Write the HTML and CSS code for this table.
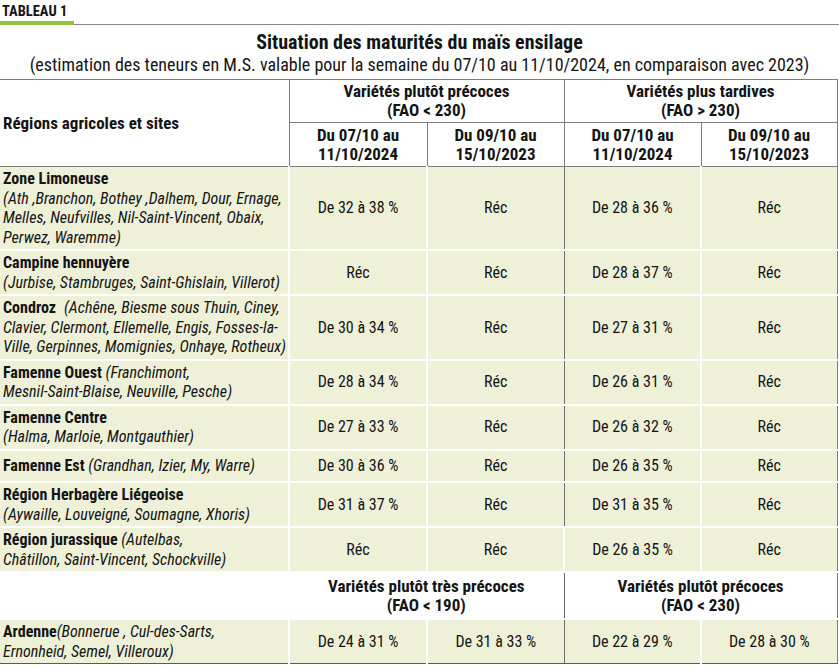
FILE: index.html
```html
<!DOCTYPE html>
<html lang="fr">
<head>
<meta charset="utf-8">
<title>Tableau 1</title>
<link rel="stylesheet" href="styles.css">
</head>
<body>
<div class="page">
  <div class="label-bar">
    <div class="label">TABLEAU 1</div>
  </div>
  <div class="title">Situation des maturités du maïs ensilage</div>
  <div class="subtitle">(estimation des teneurs en M.S. valable pour la semaine du 07/10 au 11/10/2024, en comparaison avec 2023)</div>
  <table class="grid">
    <colgroup>
      <col class="w1"><col class="w2"><col class="w3"><col class="w4"><col class="w5">
    </colgroup>
    <thead>
      <tr class="h1">
        <th rowspan="2" class="region-head">Régions agricoles et sites</th>
        <th colspan="2">Variétés plutôt précoces<br>(FAO &lt; 230)</th>
        <th colspan="2">Variétés plus tardives<br>(FAO &gt; 230)</th>
      </tr>
      <tr class="h2">
        <th>Du 07/10 au<br>11/10/2024</th>
        <th>Du 09/10 au<br>15/10/2023</th>
        <th>Du 07/10 au<br>11/10/2024</th>
        <th>Du 09/10 au<br>15/10/2023</th>
      </tr>
    </thead>
    <tbody>
      <tr>
        <td class="name"><b>Zone Limoneuse</b><br><i>(Ath ,Branchon, Bothey ,Dalhem, Dour, Ernage,<br>Melles, Neufvilles, Nil-Saint-Vincent, Obaix,<br>Perwez, Waremme)</i></td>
        <td>De 32 à 38 %</td><td class="mid">Réc</td><td>De 28 à 36 %</td><td>Réc</td>
      </tr>
      <tr>
        <td class="name"><b>Campine hennuyère</b><br><i>(Jurbise, Stambruges, Saint-Ghislain, Villerot)</i></td>
        <td>Réc</td><td class="mid">Réc</td><td>De 28 à 37 %</td><td>Réc</td>
      </tr>
      <tr>
        <td class="name"><b>Condroz</b><span class="gap"></span><i>(Achêne, Biesme sous Thuin, Ciney,<br>Clavier, Clermont, Ellemelle, Engis, Fosses-la-<br>Ville, Gerpinnes, Momignies, Onhaye, Rotheux)</i></td>
        <td>De 30 à 34 %</td><td class="mid">Réc</td><td>De 27 à 31 %</td><td>Réc</td>
      </tr>
      <tr>
        <td class="name"><b>Famenne Ouest</b> <i>(Franchimont,<br>Mesnil-Saint-Blaise, Neuville, Pesche)</i></td>
        <td>De 28 à 34 %</td><td class="mid">Réc</td><td>De 26 à 31 %</td><td>Réc</td>
      </tr>
      <tr>
        <td class="name"><b>Famenne Centre</b><br><i>(Halma, Marloie, Montgauthier)</i></td>
        <td>De 27 à 33 %</td><td class="mid">Réc</td><td>De 26 à 32 %</td><td>Réc</td>
      </tr>
      <tr class="single">
        <td class="name"><b>Famenne Est</b> <i>(Grandhan, Izier, My, Warre)</i></td>
        <td>De 30 à 36 %</td><td class="mid">Réc</td><td>De 26 à 35 %</td><td>Réc</td>
      </tr>
      <tr>
        <td class="name"><b>Région Herbagère Liégeoise</b><br><i>(Aywaille, Louveigné, Soumagne, Xhoris)</i></td>
        <td>De 31 à 37 %</td><td class="mid">Réc</td><td>De 31 à 35 %</td><td>Réc</td>
      </tr>
      <tr>
        <td class="name"><b>Région jurassique</b> <i>(Autelbas,<br>Châtillon, Saint-Vincent, Schockville)</i></td>
        <td>Réc</td><td class="mid-white">Réc</td><td>De 26 à 35 %</td><td>Réc</td>
      </tr>
      <tr class="subhead">
        <th></th>
        <th colspan="2" class="mid">Variétés plutôt très précoces<br>(FAO &lt; 190)</th>
        <th colspan="2">Variétés plutôt précoces<br>(FAO &lt; 230)</th>
      </tr>
      <tr class="last">
        <td class="name"><b>Ardenne</b><i>(Bonnerue , Cul-des-Sarts,<br>Ernonheid, Semel, Villeroux)</i></td>
        <td>De 24 à 31 %</td><td class="mid">De 31 à 33 %</td><td>De 22 à 29 %</td><td>De 28 à 30 %</td>
      </tr>
    </tbody>
  </table>
</div>
</body>
</html>
```

FILE: styles.css
```css
html, body {
  margin: 0;
  padding: 0;
  background: #ffffff;
}

body {
  font-family: "Roboto Condensed", "Liberation Sans Narrow", Roboto, "Liberation Sans", sans-serif;
  font-stretch: 75%;
  color: #141414;
}

.page {
  width: 839px;
}

.label-bar {
  border-bottom: 1px solid #8a8a8a;
  height: 25px;
  box-sizing: border-box;
  display: flex;
  align-items: flex-end;
}

.label {
  font-weight: 700;
  font-size: 14.5px;
  line-height: 17px;
  padding: 0 7px 1px 2px;
  border-bottom: 4px solid #8cc63e;
  white-space: nowrap;
  margin-bottom: -1px;
}

.title {
  text-align: center;
  font-weight: 700;
  font-size: 20px;
  line-height: 22px;
  margin-top: 6px;
}

.subtitle {
  text-align: center;
  font-size: 18px;
  line-height: 24px;
  margin-bottom: 2px;
}

.grid {
  width: 837px;
  table-layout: fixed;
  border-collapse: collapse;
  font-size: 16px;
  line-height: 19.5px;
}

.w1 { width: 289px; }
.w2 { width: 138px; }
.w3 { width: 137px; }
.w4 { width: 137px; }
.w5 { width: 136px; }

.grid th {
  font-weight: 700;
  font-size: 17px;
  line-height: 19px;
  text-align: center;
  background: #ffffff;
  border: 1px solid #7d7d7d;
  padding: 2px 4px;
  white-space: nowrap;
}

.grid thead tr.h1 th {
  height: 38px;
}

.grid thead tr.h2 th {
  height: 39px;
}

.grid th.region-head {
  text-align: left;
  padding-left: 3px;
  border-left: 0;
}

.grid td {
  background: #eef0d8;
  text-align: center;
  vertical-align: middle;
  padding: 2px 3px;
  border-right: 2px solid #ffffff;
  border-bottom: 2px solid #ffffff;
  white-space: nowrap;
}

.grid td:last-child {
  border-right: 1px solid #7d7d7d;
}

.grid td.name {
  text-align: left;
  padding-left: 3px;
}

.grid td.name b {
  font-weight: 700;
}

.gap {
  display: inline-block;
  width: 8px;
}

.grid td.mid {
  border-right: 1px solid #6e6e6e;
}

.grid tr.single td {
  padding-top: 5.5px;
  padding-bottom: 5.5px;
}

.grid tr.subhead th {
  border: 0;
  border-bottom: 2px solid #ffffff;
  height: 41px;
}

.grid tr.subhead th.mid {
  border-right: 1px solid #6e6e6e;
}

.grid tr.subhead th:last-child {
  border-right: 1px solid #7d7d7d;
}

.grid tr.last td {
  border-bottom: 1px solid #5a5a5a;
}
```
